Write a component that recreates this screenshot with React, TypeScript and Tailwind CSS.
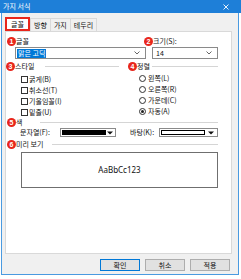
import React from "react";

function Num({ n }: { n: string }) {
  return (
    <span className="absolute left-[-9px] top-0 w-[9px] h-[9px] rounded-full bg-[#e8261c] text-white text-[7px] leading-[9px] font-bold text-center font-['Liberation_Sans',sans-serif]">
      {n}
    </span>
  );
}

function Label({ n, children }: { n?: string; children: React.ReactNode }) {
  return (
    <span className="relative block h-[9px] leading-[9px] text-[7px] whitespace-nowrap">
      {n ? <Num n={n} /> : null}
      {children}
    </span>
  );
}

function Chevron() {
  return (
    <svg width="6" height="4" viewBox="0 0 6 4" className="shrink-0">
      <polyline points="0.5,0.5 3,3 5.5,0.5" fill="none" stroke="#555" strokeWidth="0.9" />
    </svg>
  );
}

function Tri() {
  return (
    <svg width="6" height="4" viewBox="0 0 6 4" className="shrink-0">
      <polygon points="0,0.5 6,0.5 3,3.5" fill="#111" />
    </svg>
  );
}

function Check({ text }: { text: string }) {
  return (
    <div className="flex items-center h-[11px] pl-[6px] gap-[1px]">
      <span className="w-[7px] h-[7px] border border-[#333] bg-white shrink-0" />
      <span className="text-[7px] leading-[9px] whitespace-nowrap">{text}</span>
    </div>
  );
}

function Radio({ text, checked }: { text: string; checked?: boolean }) {
  return (
    <div className="flex items-center h-[11px] pl-[2px] gap-[2px]">
      <span className="w-[7px] h-[7px] rounded-full border border-[#333] bg-white shrink-0 flex items-center justify-center">
        {checked ? <span className="w-[3px] h-[3px] rounded-full bg-[#222]" /> : null}
      </span>
      <span className="text-[7px] leading-[9px] whitespace-nowrap">{text}</span>
    </div>
  );
}

export default function App() {
  return (
    <div className="w-[241px] h-[279px] bg-white flex flex-col text-[#111] text-[7px] leading-[9px] font-['Noto_Sans_CJK_KR','Noto_Sans',sans-serif] overflow-hidden">
      {/* title bar */}
      <div className="h-[13px] w-full bg-[#1e7fd8] flex items-center justify-between pl-[3px] pr-[12px] shrink-0">
        <span className="text-white text-[7px] leading-[9px]">가지 서식</span>
        <svg width="6" height="6" viewBox="0 0 6 6">
          <path d="M0.5 0.5 L5.5 5.5 M5.5 0.5 L0.5 5.5" stroke="white" strokeWidth="0.9" />
        </svg>
      </div>
      {/* body */}
      <div className="ml-[1px] w-[238px] h-[262px] bg-[#f0f0f0] border-l border-r border-b border-[#4a9ae0] flex flex-col">
        <div className="ml-[3px] w-[227px] flex flex-col">
          {/* tabs */}
          <div className="flex items-end h-[18px] pt-[4px]">
            <div className="h-[14px] w-[25px] border-2 border-[#e8261c] bg-white flex items-center justify-center">
              글꼴
            </div>
            <div className="h-[13px] px-[3px] border border-b-0 border-[#d9d9d9] flex items-center">방향</div>
            <div className="h-[13px] px-[3px] border border-b-0 border-l-0 border-[#d9d9d9] flex items-center">가지</div>
            <div className="h-[13px] px-[3px] border border-b-0 border-l-0 border-[#d9d9d9] flex items-center">테두리</div>
          </div>
          {/* panel */}
          <div className="h-[223px] bg-white border border-[#d9d9d9] pl-[9px] pr-[13px] flex flex-col">
            {/* row 1 */}
            <div className="flex pt-[5px]">
              <div className="w-[131px] flex flex-col">
                <div className="pl-[1px]">
                  <Label n="1">글꼴</Label>
                </div>
                <div className="mt-[1px] h-[12px] border border-[#8a8a8a] bg-white flex items-center pl-[1px] pr-[5px]">
                  <span className="bg-[#0078d7] text-white px-[1px]">맑은 고딕</span>
                  <div className="flex-1" />
                  <Chevron />
                </div>
              </div>
              <div className="ml-[6px] flex-1 flex flex-col">
                <div className="pl-[1px]">
                  <Label n="2">크기(S):</Label>
                </div>
                <div className="mt-[1px] h-[12px] border border-[#8a8a8a] bg-white flex items-center pl-[3px] pr-[5px]">
                  <span>14</span>
                  <div className="flex-1" />
                  <Chevron />
                </div>
              </div>
            </div>
            {/* style / align */}
            <div className="flex mt-[3px]">
              <div className="w-[104px] flex flex-col">
                <div className="flex items-center h-[9px]">
                  <div className="w-[30px]">
                    <Label n="3">스타일</Label>
                  </div>
                  <div className="flex-1 h-px bg-[#d5d5d5]" />
                </div>
                <div className="mt-[3px] flex flex-col">
                  <Check text="굵게(B)" />
                  <Check text="취소선(T)" />
                  <Check text="기울임꼴(I)" />
                  <Check text="밑줄(U)" />
                </div>
              </div>
              <div className="ml-[18px] flex-1 flex flex-col">
                <div className="flex items-center h-[9px]">
                  <div className="w-[15px]">
                    <Label n="4">정렬</Label>
                  </div>
                  <div className="flex-1 h-px bg-[#d5d5d5]" />
                </div>
                <div className="mt-[2px] flex flex-col">
                  <Radio text="왼쪽(L)" />
                  <Radio text="오른쪽(R)" />
                  <Radio text="가운데(C)" />
                  <Radio text="자동(A)" checked />
                </div>
              </div>
            </div>
            {/* color */}
            <div className="flex items-center h-[9px] pl-[1px]">
              <div className="w-[24px]">
                <Label n="5">색</Label>
              </div>
              <div className="flex-1 h-px bg-[#d5d5d5]" />
            </div>
            <div className="mt-[1px] flex items-center h-[9px] pl-[5px]">
              <div className="w-[40px] whitespace-nowrap">문자열(F):</div>
              <div className="w-[56px] h-[9px] border border-[#8a8a8a] bg-white flex items-center pl-[1px] pr-[2px]">
                <div className="w-[44px] h-[5px] bg-black" />
                <div className="flex-1" />
                <Tri />
              </div>
              <div className="ml-[14px] w-[29px] whitespace-nowrap">바탕(K):</div>
              <div className="w-[59px] h-[9px] border border-[#8a8a8a] bg-white flex items-center pl-[1px] pr-[3px]">
                <div className="w-[44px] h-[5px] bg-white border border-black" />
                <div className="flex-1" />
                <Tri />
              </div>
            </div>
            {/* preview */}
            <div className="mt-[3px] flex items-center h-[9px] pl-[1px]">
              <div className="w-[36px]">
                <Label n="6">미리 보기</Label>
              </div>
              <div className="flex-1 h-px bg-[#d5d5d5]" />
            </div>
            <div className="mt-[3px] ml-[6px] w-[197px] h-[36px] border border-[#6f6f6f] flex items-center justify-center">
              <span className="text-[8px] leading-[10px] font-['Noto_Sans',sans-serif]">AaBbCc123</span>
            </div>
          </div>
          {/* buttons */}
          <div className="mt-[5px] flex justify-end gap-[5px] pr-[2px]">
            <div className="w-[40px] h-[12px] border border-[#0078d7] bg-[#e1e1e1] flex items-center justify-center">확인</div>
            <div className="w-[40px] h-[12px] border border-[#adadad] bg-[#e1e1e1] flex items-center justify-center">취소</div>
            <div className="w-[40px] h-[12px] border border-[#adadad] bg-[#e1e1e1] flex items-center justify-center">적용</div>
          </div>
        </div>
      </div>
    </div>
  );
}
